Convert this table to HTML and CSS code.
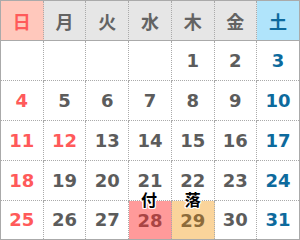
FILE: index.html
```html
<!DOCTYPE html>
<html lang="ja">
<head>
<meta charset="utf-8">
<link rel="stylesheet" href="styles.css">
</head>
<body>
<div class="cal">
  <div class="hd sun">日</div>
  <div class="hd">月</div>
  <div class="hd">火</div>
  <div class="hd">水</div>
  <div class="hd">木</div>
  <div class="hd">金</div>
  <div class="hd sat">土</div>

  <div class="c"></div>
  <div class="c"></div>
  <div class="c"></div>
  <div class="c"></div>
  <div class="c">1</div>
  <div class="c">2</div>
  <div class="c sat">3</div>

  <div class="c sun">4</div>
  <div class="c">5</div>
  <div class="c">6</div>
  <div class="c">7</div>
  <div class="c">8</div>
  <div class="c">9</div>
  <div class="c sat">10</div>

  <div class="c sun">11</div>
  <div class="c sun">12</div>
  <div class="c">13</div>
  <div class="c">14</div>
  <div class="c">15</div>
  <div class="c">16</div>
  <div class="c sat">17</div>

  <div class="c sun">18</div>
  <div class="c">19</div>
  <div class="c">20</div>
  <div class="c">21</div>
  <div class="c">22</div>
  <div class="c">23</div>
  <div class="c sat">24</div>

  <div class="c sun last">25</div>
  <div class="c last">26</div>
  <div class="c last">27</div>
  <div class="c last mark-tsuke"><span class="tag">付</span>28</div>
  <div class="c last mark-ochi"><span class="tag">落</span>29</div>
  <div class="c last">30</div>
  <div class="c sat last">31</div>
</div>
</body>
</html>
```

FILE: styles.css
```css
html, body {
  margin: 0;
  padding: 0;
  background: #fff;
}

.cal {
  box-sizing: border-box;
  width: 300px;
  height: 240px;
  border: 1px solid #aaa;
  display: grid;
  grid-template-columns: repeat(6, 42.71px) 1fr;
  grid-template-rows: 40px repeat(4, 40px) 1fr;
  font-family: "DejaVu Sans", Verdana, sans-serif;
  font-weight: bold;
}

.hd, .c {
  display: flex;
  align-items: center;
  justify-content: center;
  border-right: 1px dotted #aaa;
  position: relative;
}

.hd:nth-child(7n), .c:nth-child(7n) {
  border-right: none;
}

.hd {
  background: #e6e6e6;
  color: #636363;
  border-bottom: 1px solid #aaa;
  font-family: "Noto Sans CJK JP", sans-serif;
  font-size: 18px;
  font-weight: bold;
}

.hd.sun {
  background: #ffc8bc;
  color: #ff5a5a;
}

.hd.sat {
  background: #b0e4fb;
  color: #0d6a9d;
}

.c {
  border-bottom: 1px dotted #aaa;
  color: #5c5c5c;
  font-size: 18px;
  line-height: 20px;
}

.c.last {
  border-bottom: none;
}

.c.sun {
  color: #ff5a5a;
}

.c.sat {
  color: #0d6a9d;
}

.mark-tsuke {
  background: #ff9a9a;
  padding-top: 1px;
}

.mark-ochi {
  background: #fad49b;
  padding-top: 1px;
}

.c.mark-tsuke { color: #a94444; }
.c.mark-ochi { color: #8d6b3a; }

.tag {
  position: absolute;
  top: -10px;
  left: 0;
  right: 0;
  text-align: center;
  font-family: "Noto Sans CJK JP", sans-serif;
  font-size: 16px;
  font-weight: bold;
  line-height: 16px;
  color: #000;
  text-shadow:
    1px 0 0 #fff, -1px 0 0 #fff, 0 1px 0 #fff, 0 -1px 0 #fff,
    1px 1px 0 #fff, -1px -1px 0 #fff, 1px -1px 0 #fff, -1px 1px 0 #fff;
}

.mark-tsuke .tag {
  left: -2px;
}
```
